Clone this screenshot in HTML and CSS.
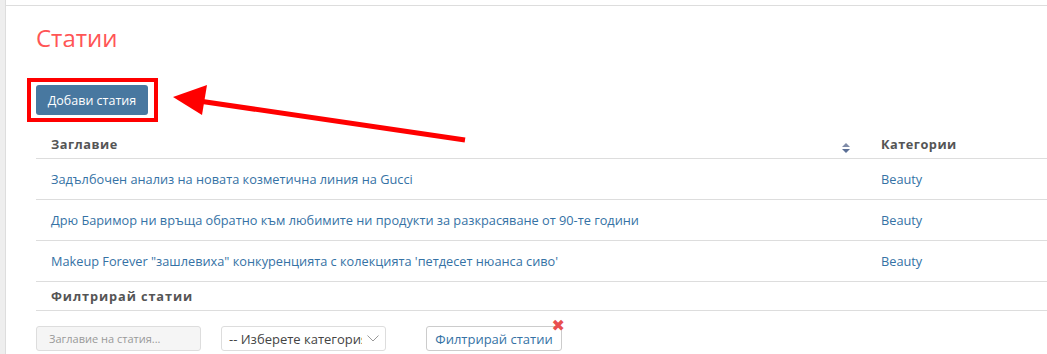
FILE: index.html
```html
<!DOCTYPE html>
<html>
<head>
<meta charset="utf-8">
<title>Статии</title>
<link rel="stylesheet" href="styles.css">
</head>
<body>
<div class="sidebar"></div>
<div class="main">
<div class="panel">

<h1 class="title">Статии</h1>

<div class="toolbar">
<span class="highlight"><button class="btn-primary">Добави статия</button></span>
</div>

<table class="articles">
<tr class="head">
<th class="col-title">Заглавие <span class="sort"><svg width="8" height="10" viewBox="0 0 8 10"><path d="M4 0L8 4H0Z" fill="#7f8ba8"/><path d="M0 6H8L4 10Z" fill="#5b6f96"/></svg></span></th>
<th class="col-cat">Категории</th>
</tr>
<tr>
<td><a href="#">Задълбочен анализ на новата козметична линия на Gucci</a></td>
<td><a href="#">Beauty</a></td>
</tr>
<tr>
<td><a href="#">Дрю Баримор ни връща обратно към любимите ни продукти за разкрасяване от 90-те години</a></td>
<td><a href="#">Beauty</a></td>
</tr>
<tr>
<td><a href="#">Makeup Forever "зашлевиха" конкуренцията с колекцията 'петдесет нюанса сиво'</a></td>
<td><a href="#">Beauty</a></td>
</tr>
<tr class="filter-head">
<th colspan="2">Филтрирай статии</th>
</tr>
</table>

<div class="filters">
<input class="search" type="text" placeholder="Заглавие на статия...">
<div class="select">
<span class="select-text">-- Изберете категория</span>
<svg class="chevron" width="12" height="7" viewBox="0 0 12 7"><path d="M0.5 0.5L6 6L11.5 0.5" fill="none" stroke="#999" stroke-width="1"/></svg>
</div>
<div class="filter-wrap">
<button class="btn-default">Филтрирай статии</button>
<span class="clear">&#10006;</span>
</div>
</div>

</div>
</div>

<svg class="arrow" width="320" height="60" viewBox="0 0 320 60">
<line x1="292" y1="55" x2="26" y2="16" stroke="#f00" stroke-width="5"/>
<path d="M0 12L34 0L29 30Z" fill="#f00"/>
</svg>
</body>
</html>
```

FILE: styles.css
```css
html, body {
	margin: 0;
	height: 100%;
	overflow: hidden;
}

body {
	display: flex;
	font-family: "Open Sans", "Liberation Sans", sans-serif;
	font-size: 13px;
	color: #555;
	background: #fff;
}

.sidebar {
	flex: 0 0 5px;
	background: #eee;
	border-right: 1px solid #ddd;
}

.main {
	flex: 1;
	min-width: 0;
	padding-top: 5px;
}

.panel {
	border-top: 1px solid #ddd;
	padding-left: 30px;
}

.title {
	margin: 14px 0 0 0;
	font-size: 24px;
	font-weight: normal;
	line-height: 36px;
	color: #f55;
}

.toolbar {
	margin-top: 22px;
}

.highlight {
	display: inline-block;
	margin-left: -9px;
	border: 4px solid #f00;
	padding: 3px 6px 3px 5px;
}

.btn-primary {
	display: block;
	width: 112px;
	height: 30px;
	border: 0;
	border-radius: 3px;
	background: #4878a0;
	color: #fff;
	font-family: inherit;
	font-size: 12.5px;
}

.articles {
	width: 1100px;
	border-collapse: collapse;
	margin-top: 8px;
	font-size: 12.75px;
}

.articles th,
.articles td {
	text-align: left;
	padding: 11px 15px;
	line-height: 18px;
	border-bottom: 1px solid #ddd;
}

.articles th {
	font-weight: bold;
	color: #555;
	letter-spacing: 0.5px;
	padding-top: 5px;
	padding-bottom: 5px;
}

.col-title {
	width: 800px;
	position: relative;
}

.sort {
	position: absolute;
	right: 16px;
	top: 9px;
}

.articles a {
	color: #3572a5;
	text-decoration: none;
}

.filter-head th {
	letter-spacing: 0.9px;
}

.filters {
	display: flex;
	align-items: center;
	margin-top: 15px;
}

.search {
	box-sizing: border-box;
	width: 165px;
	height: 25px;
	padding: 0 12px;
	border: 1px solid #ddd;
	border-radius: 3px;
	background: #f5f5f5;
	font-family: inherit;
	font-size: 11px;
}

.search::placeholder {
	color: #999;
}

.select {
	box-sizing: border-box;
	width: 165px;
	height: 25px;
	margin-left: 20px;
	padding: 0 6px 0 7px;
	border: 1px solid #ddd;
	border-radius: 3px;
	display: flex;
	align-items: center;
	gap: 5px;
}

.select-text {
	flex: 1;
	overflow: hidden;
	white-space: nowrap;
	font-size: 13px;
	color: #444;
}

.filter-wrap {
	position: relative;
	margin-left: 40px;
}

.btn-default {
	display: block;
	box-sizing: border-box;
	width: 136px;
	height: 25px;
	border: 1px solid #ccc;
	border-radius: 3px;
	background: #fff;
	color: #3572a5;
	font-family: inherit;
	font-size: 13px;
}

.clear {
	position: absolute;
	right: -3px;
	top: -8px;
	color: #e84f4f;
	font-size: 16px;
	line-height: 1;
	font-family: "DejaVu Sans", sans-serif;
}

.arrow {
	position: absolute;
	left: 173px;
	top: 85px;
}
```
